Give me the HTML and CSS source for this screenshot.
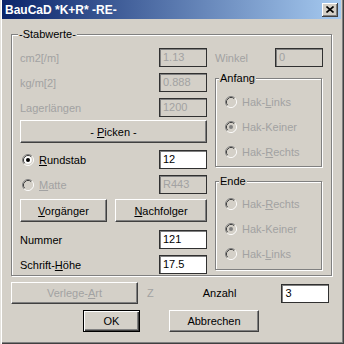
FILE: index.html
```html
<!DOCTYPE html>
<html lang="de">
<head>
    <meta charset="UTF-8">
    <title>BauCaD *K+R* -RE-</title>
    <link rel="stylesheet" href="styles.css">
</head>
<body>

<svg class="defs" width="0" height="0">
    <defs>
        <!-- 3d ring of a classic radio button -->
        <symbol id="ring" viewBox="0 0 12 12">
            <path d="M9.89 2.11A5.5 5.5 0 0 0 2.11 9.89" stroke="#808080" fill="none"/>
            <path d="M2.11 9.89A5.5 5.5 0 0 0 9.89 2.11" stroke="#fff" fill="none"/>
            <path d="M9.18 2.82A4.5 4.5 0 0 0 2.82 9.18" stroke="#404040" fill="none"/>
            <path d="M2.82 9.18A4.5 4.5 0 0 0 9.18 2.82" stroke="#d4d0c8" fill="none"/>
        </symbol>
    </defs>
</svg>

<div class="window">
    <div class="titlebar">
        <span class="title">BauCaD *K+R* -RE-</span>
        <span class="close">
            <svg width="8" height="7" viewBox="0 0 8 7"><path d="M0.5 0.5L7.5 6.5M7.5 0.5L0.5 6.5" stroke="#000" stroke-width="1.6"/></svg>
        </span>
    </div>

    <div class="dialog">
        <fieldset class="group stabwerte">
            <legend>-Stabwerte-</legend>
            <div class="cols">
                <div class="left">
                    <div class="row"><span class="dis">cm2[/m]</span><span class="field dis">1.13</span></div>
                    <div class="row"><span class="dis">kg/m[2]</span><span class="field dis">0.888</span></div>
                    <div class="row"><span class="dis">Lagerlängen</span><span class="field dis">1200</span></div>
                    <div class="btn btn-pick"><span>- <u>P</u>icken -</span></div>
                    <div class="row">
                        <span class="opt">
                            <svg class="radio"><use href="#ring" width="12" height="12"/><circle class="well" cx="6" cy="6" r="3.8"/><circle class="dot" cx="6" cy="6" r="2"/></svg>
                            <span><u>R</u>undstab</span>
                        </span>
                        <span class="field">12</span>
                    </div>
                    <div class="row">
                        <span class="opt dis">
                            <svg class="radio"><use href="#ring" width="12" height="12"/><circle class="well" cx="6" cy="6" r="3.8"/></svg>
                            <span><u>M</u>atte</span>
                        </span>
                        <span class="field dis">R443</span>
                    </div>
                    <div class="btn-pair">
                        <div class="btn btn-prev"><span><u>V</u>orgänger</span></div>
                        <div class="btn btn-next"><span><u>N</u>achfolger</span></div>
                    </div>
                    <div class="row"><span>Nummer</span><span class="field">121</span></div>
                    <div class="row"><span>Schrift-<u>H</u>öhe</span><span class="field">17.5</span></div>
                </div>

                <div class="right">
                    <div class="row"><span class="dis">Winkel</span><span class="field dis">0</span></div>

                    <fieldset class="group side">
                        <legend>Anfang</legend>
                        <div class="opts">
                            <span class="opt dis">
                                <svg class="radio"><use href="#ring" width="12" height="12"/><circle class="well" cx="6" cy="6" r="3.8"/></svg>
                                <span>Hak-<u>L</u>inks</span>
                            </span>
                            <span class="opt dis">
                                <svg class="radio"><use href="#ring" width="12" height="12"/><circle class="well" cx="6" cy="6" r="3.8"/><circle class="dot" cx="6" cy="6" r="2"/></svg>
                                <span>Hak-Keiner</span>
                            </span>
                            <span class="opt dis">
                                <svg class="radio"><use href="#ring" width="12" height="12"/><circle class="well" cx="6" cy="6" r="3.8"/></svg>
                                <span>Hak-<u>R</u>echts</span>
                            </span>
                        </div>
                    </fieldset>

                    <fieldset class="group side ende">
                        <legend>Ende</legend>
                        <div class="opts">
                            <span class="opt dis">
                                <svg class="radio"><use href="#ring" width="12" height="12"/><circle class="well" cx="6" cy="6" r="3.8"/></svg>
                                <span>Hak-<u>R</u>echts</span>
                            </span>
                            <span class="opt dis">
                                <svg class="radio"><use href="#ring" width="12" height="12"/><circle class="well" cx="6" cy="6" r="3.8"/><circle class="dot" cx="6" cy="6" r="2"/></svg>
                                <span>Hak-Keiner</span>
                            </span>
                            <span class="opt dis">
                                <svg class="radio"><use href="#ring" width="12" height="12"/><circle class="well" cx="6" cy="6" r="3.8"/></svg>
                                <span>Hak-<u>L</u>inks</span>
                            </span>
                        </div>
                    </fieldset>
                </div>
            </div>
        </fieldset>

        <div class="footer-row">
            <div class="btn btn-verlege dis"><span>Verlege-<u>A</u>rt</span></div>
            <span class="z dis">Z</span>
            <span class="anzahl">Anzahl</span>
            <span class="field field-anzahl">3</span>
        </div>
        <div class="footer-row actions">
            <div class="btn btn-ok">OK</div>
            <div class="btn btn-cancel">Abbrechen</div>
        </div>
    </div>
</div>

</body>
</html>
```

FILE: styles.css
```css
* {
    box-sizing: border-box;
}
body {
    margin: 0;
    font-family: "Liberation Sans", Arial, sans-serif;
    font-size: 11px;
    color: #000;
}
.defs {
    position: absolute;
}
.window {
    width: 344px;
    height: 344px;
    background-color: #d4d0c8;
    padding: 0 3px 0 2px;
    box-shadow: inset 1px 0 0 #e4e2dd, inset 2px 0 0 #fff,
                inset -1px -1px 0 #404040, inset -2px -2px 0 #808080;
}
.titlebar {
    height: 19px;
    display: flex;
    align-items: center;
    justify-content: space-between;
    padding: 0 3px;
    background: linear-gradient(to right, #0a246a, #a6caf0);
    color: #fff;
    font-weight: bold;
    font-size: 12px;
}
.close {
    width: 16px;
    height: 14px;
    display: flex;
    align-items: center;
    justify-content: center;
    background-color: #d4d0c8;
    box-shadow: inset -1px -1px 0 #404040, inset 1px 1px 0 #fff, inset -2px -2px 0 #808080;
}
.dialog {
    padding: 9px 0 0 9px;
}

/* group boxes */
.group {
    margin: 0;
    padding: 0;
    min-inline-size: 0;
    border: 1px solid #808080;
    box-shadow: 1px 1px 0 #fff, inset 1px 1px 0 #fff;
}
.group legend {
    font-size: 11px;
    line-height: 13px;
    padding: 0 1px;
    margin-left: 3px;
    background-color: #d4d0c8;
}
.stabwerte {
    width: 321px;
    padding: 7px 0 1px 0;
}
.stabwerte > legend {
    margin-left: 6px;
}
.cols {
    display: flex;
    gap: 8px;
    padding: 0 8px;
}
.left {
    width: 187px;
    display: flex;
    flex-direction: column;
}
.right {
    width: 108px;
}
.side {
    width: 107px;
    margin-top: 5px;
    padding: 9px 0 6px 0;
}
.side.ende {
    margin-top: 8px;
    padding: 8px 0 7px 0;
}
.opts {
    display: flex;
    flex-direction: column;
    gap: 9px;
    padding-left: 9px;
}

/* rows */
.row {
    height: 19px;
    display: flex;
    align-items: center;
    justify-content: space-between;
}
.row + .row {
    margin-top: 6px;
}
.btn-pick {
    margin-top: 3px;
}
.btn-pick + .row {
    margin-top: 7px;
}
.btn-pair {
    display: flex;
    justify-content: space-between;
    margin-top: 5px;
}
.btn-pair + .row {
    margin-top: 8px;
}
.dis {
    color: #a2a2a2;
}

/* edit fields */
.field {
    width: 48px;
    height: 19px;
    padding-left: 3px;
    line-height: 17px;
    background-color: #fff;
    border: 1px solid #303030;
    box-shadow: inset 1px 1px 0 #808080;
}
.field.dis {
    background-color: #d4d0c8;
}

/* radios */
.opt {
    height: 16px;
    display: flex;
    align-items: center;
    gap: 5px;
}
.left .opt {
    padding-left: 2px;
}
.radio {
    width: 12px;
    height: 12px;
    flex: none;
}
.radio .well {
    fill: #fff;
}
.radio .dot {
    fill: #000;
}
.opt.dis .radio .well {
    fill: #d4d0c8;
}
.opt.dis .radio .dot {
    fill: #808080;
}

/* buttons */
.btn {
    height: 23px;
    display: flex;
    align-items: center;
    justify-content: center;
    background-color: #d4d0c8;
    border: 1px solid;
    border-color: #fff #404040 #404040 #fff;
    box-shadow: inset -1px -1px 0 #808080;
    white-space: pre;
}
.btn-prev {
    width: 87px;
}
.btn-next {
    width: 92px;
}

/* footer */
.footer-row {
    display: flex;
    align-items: center;
    margin-top: 6px;
}
.footer-row .btn {
    height: 22px;
}
.btn-verlege {
    width: 127px;
}
.z {
    margin-left: 9px;
}
.anzahl {
    margin-left: 49px;
}
.field-anzahl {
    margin-left: 45px;
}
.btn-ok {
    width: 57px;
    margin-left: 72px;
    border: 1px solid #000;
    box-shadow: inset 1px 1px 0 #fff, inset -1px -1px 0 #404040, inset -2px -2px 0 #808080;
}
.btn-cancel {
    width: 90px;
    margin-left: 29px;
}
```
